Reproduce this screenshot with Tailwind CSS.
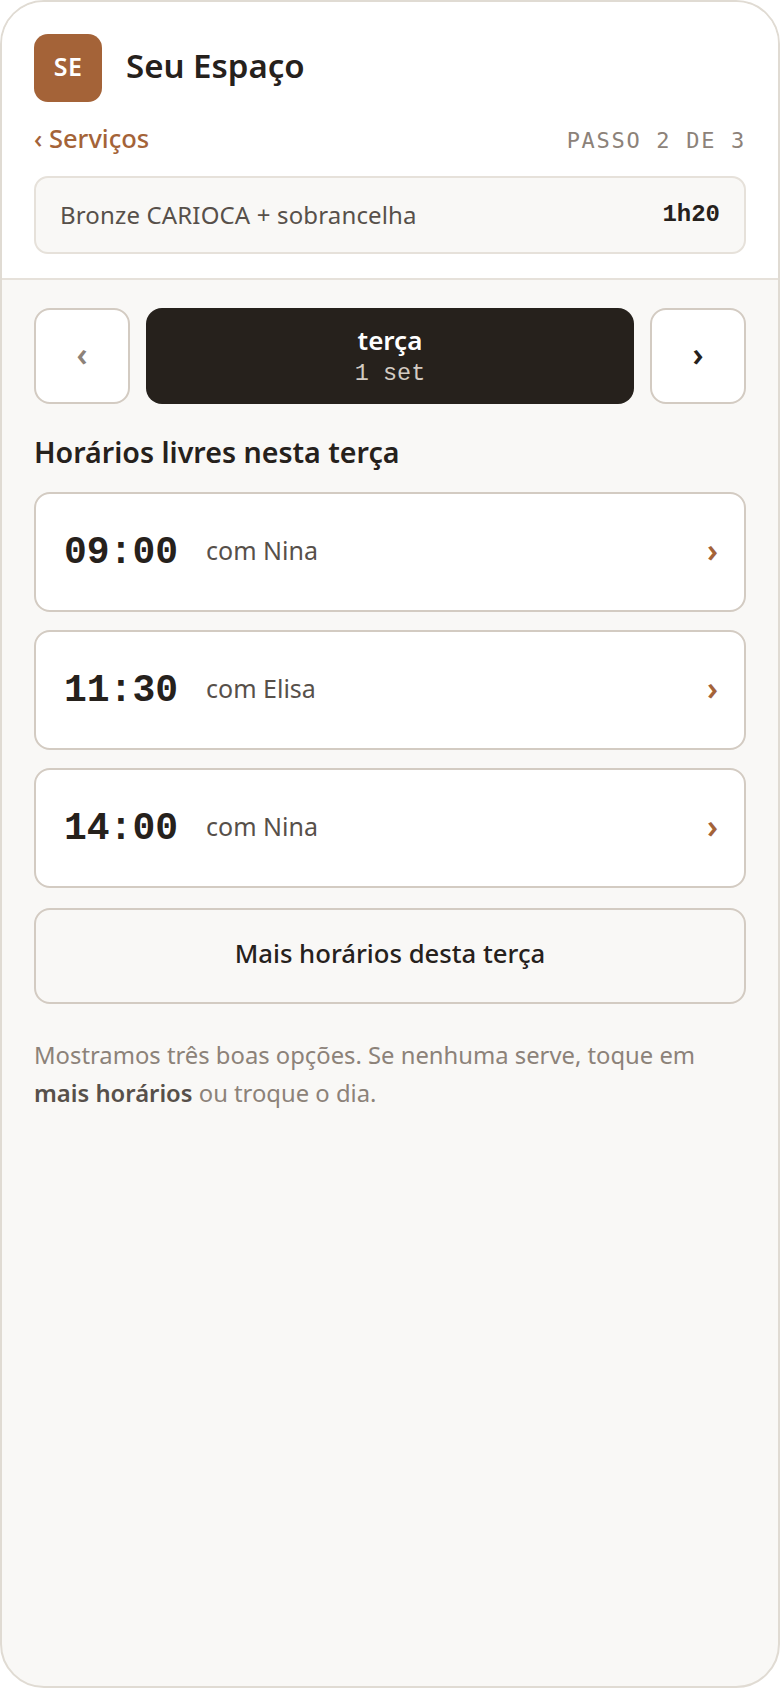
<!DOCTYPE html>
<html lang="pt-BR">
<head>
    <meta charset="UTF-8">
    <meta name="viewport" content="width=device-width, initial-scale=1.0">
    <title>Seu Espaço</title>
    <script src="https://cdn.jsdelivr.net/npm/@tailwindcss/browser@4"></script>
</head>
<body class="bg-white font-['Noto_Sans',sans-serif]">
    <div class="w-[780px] h-[1688px] flex flex-col overflow-hidden rounded-[44px] border-2 border-[#e0dbd3] bg-[#f9f8f6] text-[#26211c]">
        <!-- header -->
        <header class="bg-white border-b-2 border-[#e6e1da] px-8 pt-8 pb-6">
            <div class="flex items-center gap-6">
                <div class="w-[68px] h-[68px] pb-0.5 rounded-[14px] bg-[#a46338] flex items-center justify-center text-white text-[25px] tracking-[0.5px] font-semibold">SE</div>
                <h1 class="pb-1 text-[33px] leading-[40px] font-semibold">Seu Espaço</h1>
            </div>
            <div class="flex items-center justify-between mt-5 h-9">
                <a class="pb-1 text-[#a46338] text-[25.5px] font-medium">‹ Serviços</a>
                <span class="font-['DejaVu_Sans_Mono',monospace] text-[#8c8279] text-[22px] tracking-[1.7px]">PASSO 2 DE 3</span>
            </div>
            <div class="flex items-center justify-between mt-[18px] h-[78px] px-6 rounded-[14px] border-2 border-[#e6e1da] bg-[#f9f8f6]">
                <span class="text-[24px] tracking-[0.15px] text-[#57504a]">Bronze CARIOCA + sobrancelha</span>
                <span class="font-['Liberation_Mono',monospace] text-[24px] font-bold">1h20</span>
            </div>
        </header>

        <main class="px-8 pt-7">
            <!-- day picker -->
            <div class="flex gap-4">
                <button class="w-24 h-24 pb-1 rounded-2xl border-2 border-[#d3cbc2] bg-white flex items-center justify-center text-[#8c8279] text-[32px] font-semibold">‹</button>
                <div class="flex-1 h-24 rounded-2xl bg-[#26211c] flex flex-col items-center justify-center">
                    <span class="text-white text-[26px] leading-8 font-semibold -translate-y-0.5">terça</span>
                    <span class="font-['Liberation_Mono',monospace] text-[#d3cbc2] text-[23.5px] leading-7 translate-y-0.5">1 set</span>
                </div>
                <button class="w-24 h-24 pb-1 rounded-2xl border-2 border-[#d3cbc2] bg-white flex items-center justify-center text-[#26211c] text-[32px] font-semibold">›</button>
            </div>

            <h2 class="mt-[30px] text-[28.6px] leading-9 font-semibold">Horários livres nesta terça</h2>

            <!-- slots -->
            <div class="mt-[22px] flex flex-col gap-[18px]">
                <a class="h-[120px] px-7 rounded-2xl border-2 border-[#d3cbc2] bg-white flex items-center">
                    <span class="font-['Liberation_Mono',monospace] text-[38px] font-bold">09:00</span>
                    <span class="ml-7 pb-0.5 text-[25px] text-[#57504a]">com Nina</span>
                    <span class="ml-auto pb-1 -mr-0.5 text-[#a46338] text-[32px] font-semibold">›</span>
                </a>
                <a class="h-[120px] px-7 rounded-2xl border-2 border-[#d3cbc2] bg-white flex items-center">
                    <span class="font-['Liberation_Mono',monospace] text-[38px] font-bold">11:30</span>
                    <span class="ml-7 pb-0.5 text-[25px] text-[#57504a]">com Elisa</span>
                    <span class="ml-auto pb-1 -mr-0.5 text-[#a46338] text-[32px] font-semibold">›</span>
                </a>
                <a class="h-[120px] px-7 rounded-2xl border-2 border-[#d3cbc2] bg-white flex items-center">
                    <span class="font-['Liberation_Mono',monospace] text-[38px] font-bold">14:00</span>
                    <span class="ml-7 pb-0.5 text-[25px] text-[#57504a]">com Nina</span>
                    <span class="ml-auto pb-1 -mr-0.5 text-[#a46338] text-[32px] font-semibold">›</span>
                </a>
            </div>

            <button class="mt-5 w-full h-24 pb-1 rounded-2xl border-2 border-[#d3cbc2] text-[25.7px] font-medium">Mais horários desta terça</button>

            <p class="mt-[32px] text-[23.8px] leading-[38px] text-[#8c8279]">Mostramos três boas opções. Se nenhuma serve, toque em <strong class="font-semibold text-[#57504a]">mais horários</strong> ou troque o dia.</p>
        </main>
    </div>
</body>
</html>
